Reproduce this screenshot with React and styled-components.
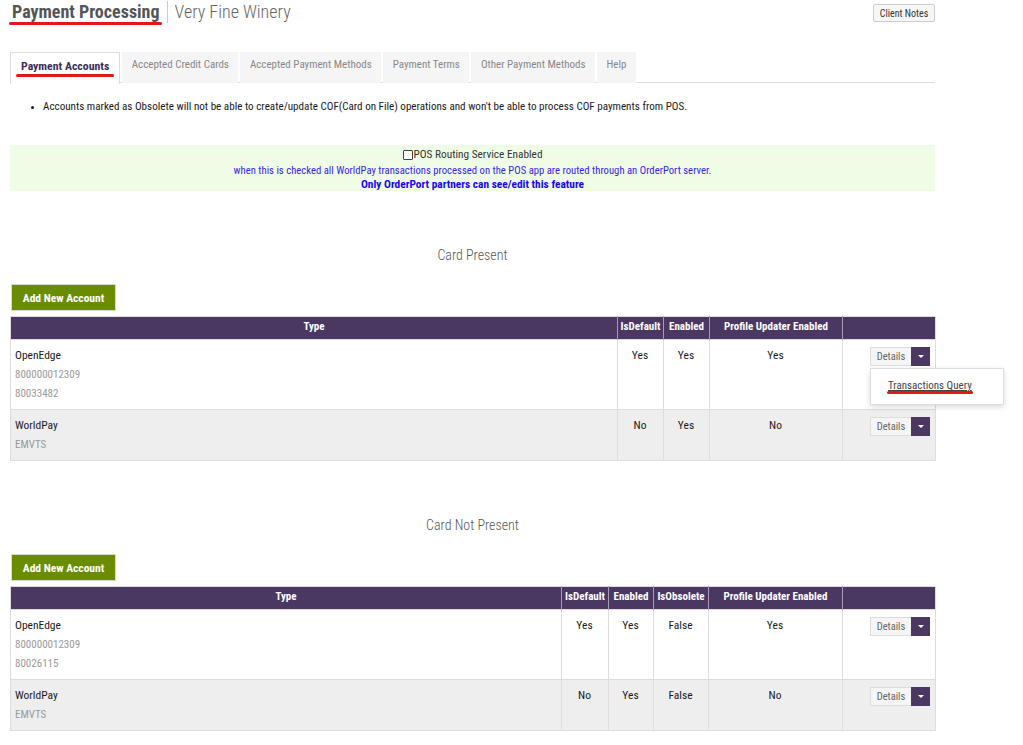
import React from "react";
import styled, { createGlobalStyle } from "styled-components";

const FONT = `"Roboto Condensed", Roboto, "Liberation Sans", sans-serif`;

const Global = createGlobalStyle`
  html, body { margin: 0; padding: 0; background: #fff; }
  body {
    font-family: ${FONT};
    font-size: 11.5px;
    color: #1a1a1a;
  }
  * { box-sizing: border-box; }
`;

const Page = styled.div`
  width: 1023px;
  padding: 0 0 0 10px;
`;

const Content = styled.div`
  width: 925px;
`;

const Header = styled.header`
  display: flex;
  align-items: flex-start;
  justify-content: space-between;
  height: 30px;
  padding-top: 1px;
`;

const TitleRow = styled.div`
  display: flex;
  align-items: center;
  padding-left: 2px;
`;

const Marked = styled.span`
  position: relative;
  &::after {
    content: "";
    position: absolute;
    left: ${(p) => p.$l ?? -2}px;
    right: ${(p) => p.$r ?? 0}px;
    bottom: ${(p) => p.$b ?? -2}px;
    height: 3px;
    border-radius: 2px;
    background: #e3161b;
  }
`;

const Title = styled.h1`
  margin: 0;
  font-size: 18px;
  line-height: 22px;
  font-weight: 700;
  color: #555;
`;

const Subtitle = styled.span`
  font-size: 18px;
  line-height: 22px;
  font-weight: 300;
  color: #666;
  border-left: 1px solid #ccc;
  margin-left: 7px;
  padding-left: 7px;
`;

const SmallButton = styled.button`
  font-family: ${FONT};
  font-size: 10px;
  color: #333;
  background: #f7f7f7;
  border: 1px solid #ccc;
  border-radius: 2px;
  height: 18px;
  width: 62px;
  padding: 0;
  margin-top: 3px;
  cursor: pointer;
`;

const Tabs = styled.nav`
  display: flex;
  gap: 2px;
  margin-top: 22px;
  border-bottom: 1px solid #ddd;
  height: 31px;
`;

const Tab = styled.div`
  height: 31px;
  line-height: 24px;
  padding: 0 ${(p) => (p.$active ? "10px" : "8.5px")};
  font-size: ${(p) => (p.$active ? "11.8px" : "11px")};
  background: ${(p) => (p.$active ? "#fff" : "#f5f5f5")};
  color: ${(p) => (p.$active ? "#3b2d57" : "#888")};
  font-weight: ${(p) => (p.$active ? 700 : 400)};
  border: 1px solid ${(p) => (p.$active ? "#ddd" : "transparent")};
  border-bottom: none;
  margin-bottom: -1px;
  ${(p) => p.$active && "height: 32px; padding-top: 1px;"}
`;

const Notes = styled.ul`
  margin: 15px 0 0;
  padding-left: 33px;
  line-height: 18px;
  color: #1a1a1a;
  font-size: 11.1px;
  li::marker { font-size: 9px; }
`;

const RoutingBox = styled.div`
  margin-top: 29px;
  background: #f0fde6;
  height: 46px;
  padding-top: 2px;
  text-align: center;
`;

const CheckLine = styled.label`
  display: flex;
  justify-content: center;
  align-items: center;
  font-size: 11.3px;
  line-height: 16px;
  color: #333;
`;

const Box = styled.span`
  display: inline-block;
  width: 10px;
  height: 10px;
  border: 1px solid #444;
  border-radius: 1px;
  background: #fff;
  margin-right: 1px;
`;

const BlueLine = styled.div`
  font-size: ${(p) => (p.$bold ? "11.4px" : "10.7px")};
  line-height: ${(p) => (p.$bold ? "12px" : "15px")};
  color: ${(p) => (p.$bold ? "#1a05f0" : "#3a1ee8")};
  font-weight: ${(p) => (p.$bold ? 700 : 400)};
`;

const SectionTitle = styled.h2`
  margin: 56px 0 0;
  font-size: 14px;
  line-height: 16px;
  font-weight: 300;
  color: #555;
  text-align: center;
`;

const AddButton = styled.button`
  display: block;
  margin: 21px 0 0 1px;
  height: 27px;
  width: 105px;
  background: #6a8d00;
  color: #fff;
  border: 1px solid #d7dccb;
  font-family: ${FONT};
  font-size: 11.5px;
  font-weight: 700;
  white-space: nowrap;
  padding: 0;
  cursor: pointer;
`;

const Table = styled.table`
  margin-top: 5px;
  width: 925px;
  border-collapse: collapse;
  table-layout: fixed;
  border: 1px solid #ddd;
`;

const Col = styled.col`
  width: ${(p) => p.$w}px;
`;

const Th = styled.th`
  background: #4a3863;
  color: #fff;
  font-size: 11px;
  font-weight: 700;
  height: 23px;
  padding: 0 2px 3px;
  text-align: center;
  white-space: nowrap;
  border-left: 1px solid #a59cb5;
  &:first-child { border-left: none; }
`;

const Tr = styled.tr`
  background: ${(p) => (p.$alt ? "#eeeeee" : "#fff")};
  border-top: 1px solid #ddd;
`;

const Td = styled.td`
  vertical-align: top;
  padding: 6px 5px 6px 4px;
  line-height: 19px;
  font-size: 11.5px;
  color: #1a1a1a;
  text-align: ${(p) => p.$align || "center"};
  border-left: 1px solid #ddd;
  &:first-child { border-left: none; }
`;

const Sub = styled.div`
  color: #999;
  font-size: 11px;
`;

const Group = styled.div`
  position: relative;
  display: inline-flex;
  margin-top: 1px;
`;

const DetailsBtn = styled.button`
  height: 19px;
  width: 41px;
  padding: 0;
  font-family: ${FONT};
  font-size: 10.5px;
  color: #666;
  background: #f5f5f5;
  border: 1px solid #ddd;
  border-right: none;
  cursor: pointer;
`;

const Toggle = styled.button`
  width: 19px;
  height: 19px;
  padding: 0;
  border: none;
  background: #4a3863;
  display: flex;
  align-items: center;
  justify-content: center;
  cursor: pointer;
  &::after {
    content: "";
    border-left: 3px solid transparent;
    border-right: 3px solid transparent;
    border-top: 3px solid #fff;
  }
`;

const Menu = styled.div`
  position: absolute;
  top: 21px;
  left: 0;
  width: 134px;
  height: 37px;
  background: #fff;
  border: 1px solid #ddd;
  box-shadow: 0 2px 6px rgba(0, 0, 0, 0.15);
  padding: 7px 0 0 17px;
  text-align: left;
  z-index: 5;
`;

const MenuLink = styled.a`
  font-size: 11px;
  color: #444;
  text-decoration: underline;
  line-height: 18px;
`;

function Actions({ open }) {
  return (
    <Group>
      <DetailsBtn>Details</DetailsBtn>
      <Toggle aria-label="toggle" />
      {open && (
        <Menu>
          <Marked $l={-1} $r={-1} $b={-2}>
            <MenuLink>Transactions Query</MenuLink>
          </Marked>
        </Menu>
      )}
    </Group>
  );
}

function AccountTable({ cols, headers, rows }) {
  return (
    <Table>
      <colgroup>
        {cols.map((w, i) => (
          <Col key={i} $w={w} />
        ))}
      </colgroup>
      <thead>
        <tr>
          {headers.map((h, i) => (
            <Th key={i}>{h}</Th>
          ))}
        </tr>
      </thead>
      <tbody>
        {rows.map((r, i) => (
          <Tr key={i} $alt={i % 2 === 1}>
            <Td $align="left">
              {r.name}
              {r.sub.map((s) => (
                <Sub key={s}>{s}</Sub>
              ))}
            </Td>
            {r.vals.map((v, j) => (
              <Td key={j}>{v}</Td>
            ))}
            <Td $align="right">
              <Actions open={r.open} />
            </Td>
          </Tr>
        ))}
      </tbody>
    </Table>
  );
}

export default function App() {
  return (
    <Page>
      <Global />
      <Content>
        <Header>
          <TitleRow>
            <Marked $l={-3} $r={-2} $b={-2}>
              <Title>Payment Processing</Title>
            </Marked>
            <Subtitle>Very Fine Winery</Subtitle>
          </TitleRow>
          <SmallButton>Client Notes</SmallButton>
        </Header>

        <Tabs>
          <Tab $active>
            <Marked $l={-5} $r={-5} $b={-4}>Payment Accounts</Marked>
          </Tab>
          <Tab>Accepted Credit Cards</Tab>
          <Tab>Accepted Payment Methods</Tab>
          <Tab>Payment Terms</Tab>
          <Tab>Other Payment Methods</Tab>
          <Tab>Help</Tab>
        </Tabs>

        <Notes>
          <li>
            Accounts marked as Obsolete will not be able to create/update COF(Card on File) operations and won't be able to process COF payments from POS.
          </li>
        </Notes>

        <RoutingBox>
          <CheckLine>
            <Box />
            POS Routing Service Enabled
          </CheckLine>
          <BlueLine>
            when this is checked all WorldPay transactions processed on the POS app are routed through an OrderPort server.
          </BlueLine>
          <BlueLine $bold>Only OrderPort partners can see/edit this feature</BlueLine>
        </RoutingBox>

        <SectionTitle>Card Present</SectionTitle>
        <AddButton>Add New Account</AddButton>
        <AccountTable
          cols={[607, 46, 46, 133, 93]}
          headers={["Type", "IsDefault", "Enabled", "Profile Updater Enabled", ""]}
          rows={[
            { name: "OpenEdge", sub: ["800000012309", "80033482"], vals: ["Yes", "Yes", "Yes"], open: true },
            { name: "WorldPay", sub: ["EMVTS"], vals: ["No", "Yes", "No"] },
          ]}
        />

        <SectionTitle>Card Not Present</SectionTitle>
        <AddButton>Add New Account</AddButton>
        <AccountTable
          cols={[551, 47, 45, 55, 134, 93]}
          headers={["Type", "IsDefault", "Enabled", "IsObsolete", "Profile Updater Enabled", ""]}
          rows={[
            { name: "OpenEdge", sub: ["800000012309", "80026115"], vals: ["Yes", "Yes", "False", "Yes"] },
            { name: "WorldPay", sub: ["EMVTS"], vals: ["No", "Yes", "False", "No"] },
          ]}
        />
      </Content>
    </Page>
  );
}
